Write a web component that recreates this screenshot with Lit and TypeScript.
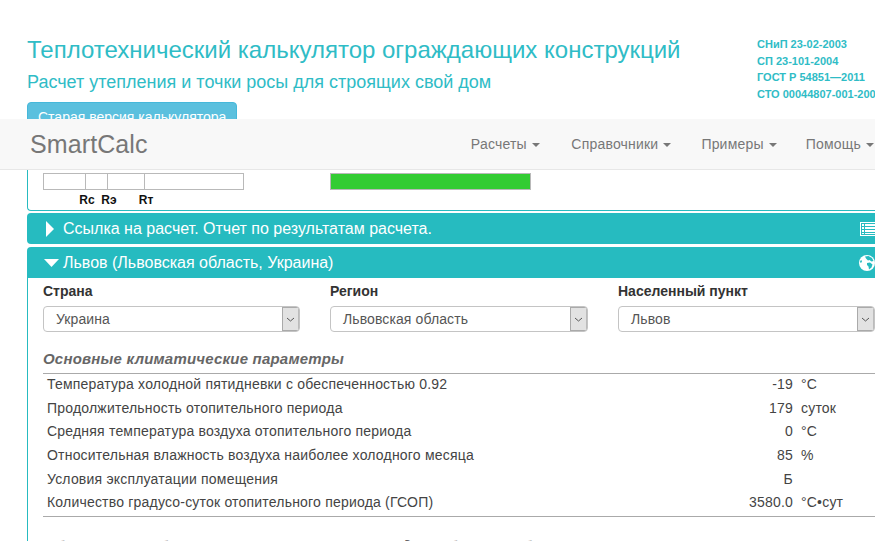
import { LitElement, html, css, svg } from "lit";
import { customElement } from "lit/decorators.js";

const select = (v: string) => html`<div class="select"><span>${v}</span><i><svg width="9" height="5" viewBox="0 0 9 5"><path d="M1 1l3.500 3L8 1" fill="none" stroke="#555" stroke-width="1"/></svg></i></div>`;

const rows = [
  ["Температура холодной пятидневки с обеспеченностью 0.92", "-19", "°C"],
  ["Продолжительность отопительного периода", "179", "суток"],
  ["Средняя температура воздуха отопительного периода", "0", "°C"],
  ["Относительная влажность воздуха наиболее холодного месяца", "85", "%"],
  ["Условия эксплуатации помещения", "Б", ""],
  ["Количество градусо-суток отопительного периода (ГСОП)", "3580.0", "°C•сут"],
];

const listIcon = svg`<svg width="15" height="16" viewBox="0 0 15 16"><path fill="#fff" d="M0 1h15v14H0z"/><path fill="#26bbc0" d="M1 2h14v12H1z"/><path fill="#fff" d="M2 3h2v2H2zM5 3h10v2H5zM2 6h2v2H2zM5 6h10v2H5zM2 9h2v2H2zM5 9h10v2H5zM2 12h2v1H2zM5 12h10v1H5z"/></svg>`;
const globeIcon = svg`<svg width="16" height="16" viewBox="0 0 16 16"><circle cx="8" cy="8" r="8" fill="#fff"/><path fill="#26bbc0" d="M6 1.500L9.500 1 13 3l1.500 3-2 .5-2-1.500-1.500.5L7 3.500zM8 8l3-.5 2.500 2-1 3-2.500 2-.5-3-1.500-1.500zM1 6l1.500-1L3 7 1.500 8z"/></svg>`;

@customElement("app-root")
export class AppRoot extends LitElement {
  static styles = css`
    :host { display: block; position: relative; width: 875px; height: 541px; overflow: hidden; background: #fff; font-family: "Liberation Sans", Arial, sans-serif; color: #333; }
    .head { display: flex; height: 119px; padding-left: 27px; box-sizing: border-box; overflow: hidden; }
    .titles { width: 730px; flex: none; }
    h1 { margin: 35px 0 0; font-size: 24px; line-height: 30px; font-weight: 400; color: #2fbcc6; white-space: nowrap; }
    h2 { margin: 6px 0 0; font-size: 18px; line-height: 22px; font-weight: 400; color: #2fbcc6; white-space: nowrap; }
    .old { display: inline-block; margin-top: 9px; padding: 4px 10px; height: 32px; box-sizing: border-box; background: #5bc0de; border: 1px solid #46b8da; border-radius: 4px; color: #fff; font-size: 14px; line-height: 20px; }
    .norms { margin: 36px 0 0; font-size: 11px; font-weight: 700; line-height: 16.500px; color: #2fbcc6; white-space: nowrap; }
    nav { display: flex; align-items: center; height: 51px; box-sizing: border-box; background: #f8f8f8; border-bottom: 1px solid #e7e7e7; padding: 0 0 0 30px; overflow: hidden; }
    .brand { font-size: 25px; letter-spacing: .1px; color: #777; line-height: 50px; margin-top: -1px; }
    .menu { display: flex; margin-left: auto; gap: 30px; font-size: 14px; letter-spacing: .2px; color: #777; margin-right: 1px; white-space: nowrap; }
    .menu span { display: inline-flex; align-items: center; gap: 5px; }
    .menu span:first-child { margin-right: 1.500px; }
    .menu span:nth-child(3) { margin-right: -1px; }
    .caret { width: 0; height: 0; border-left: 4px solid transparent; border-right: 4px solid transparent; border-top: 4px solid #777; margin-top: 2px; }
    .main { margin-left: 27px; margin-right: -10px; }
    .panel { border-left: 1px solid #26bbc0; border-bottom: 1px solid #26bbc0; border-radius: 0 0 0 4px; height: 41px; padding: 3px 0 0 15px; box-sizing: border-box; display: grid; grid-template-columns: 287px 1fr; }
    .scale { position: relative; width: 201px; height: 17px; border: 1px solid #b9b9b9; box-sizing: border-box; }
    .tick { position: absolute; top: 0; height: 15px; width: 1px; background: #b9b9b9; }
    .lab { position: absolute; top: 19px; font-size: 12px; font-weight: 700; line-height: 15px; color: #111; transform: translateX(-50%); }
    .green { width: 201px; height: 17px; box-sizing: border-box; background: #33cc33; border: 1px solid #b9b9b9; }
    .bar { display: flex; align-items: center; height: 31px; background: #26bbc0; color: #fff; font-size: 16px; border-radius: 4px 4px 0 0; margin-top: 3px; padding-right: 10px; white-space: nowrap; }
    .bar.first { border-radius: 4px; margin-top: 2px; }
    .bar .ico { margin-left: auto; display: flex; }
    .bar b { display: flex; justify-content: flex-end; box-sizing: border-box; width: 36px; padding-right: 8px; flex: none; }
    .bar.open b { padding-right: 4px; }
    .body { border-left: 1px solid #26bbc0; padding: 0 0 0 15px; height: 400px; }
    .filters { display: grid; grid-template-columns: 287px 288px 257px; padding-top: 3px; }
    label { display: block; font-size: 14px; font-weight: 700; line-height: 20px; color: #333; margin-bottom: 5px; }
    .select { display: flex; box-sizing: border-box; height: 26px; border: 1px solid #c4c4c4; border-radius: 4px; font-size: 14px; letter-spacing: .1px; color: #555; background: #fff; overflow: hidden; }
    .filters > div:nth-child(1) .select { width: 257px; }
    .filters > div:nth-child(2) .select { width: 258px; }
    .filters > div:nth-child(3) .select { width: 257px; }
    .select span { flex: 1; padding-left: 12px; line-height: 24px; }
    .select i { width: 15px; flex: none; background: #e2e2e2; border: 1px solid #aaa; border-right-color: #bbb; display: flex; align-items: center; justify-content: center; }
    h4 { margin: 17px 0 4px; font-size: 15px; line-height: 20px; font-weight: 700; font-style: italic; letter-spacing: .2px; color: #666; white-space: nowrap; }
    table { border-collapse: collapse; width: 832px; border-top: 1px solid #aaa; border-bottom: 1px solid #aaa; font-size: 14px; letter-spacing: .2px; color: #444; }
    td { padding: 0 0 3px 4px; height: 20.600px; line-height: 20px; white-space: nowrap; }
    td.v { text-align: right; width: 60px; padding-left: 0; }
    td.u { width: 74px; padding-left: 8px; }
    h4.next { margin-top: 19px; }
  `;
  render() {
    return html`
      <div class="head">
        <div class="titles">
          <h1>Теплотехнический калькулятор ограждающих конструкций</h1>
          <h2>Расчет утепления и точки росы для строящих свой дом</h2>
          <span class="old">Старая версия калькулятора</span>
        </div>
        <div class="norms">СНиП 23-02-2003<br>СП 23-101-2004<br>ГОСТ Р 54851—2011<br>СТО 00044807-001-2006</div>
      </div>
      <nav>
        <div class="brand">SmartCalc</div>
        <div class="menu">
          <span>Расчеты <em class="caret"></em></span>
          <span>Справочники <em class="caret"></em></span>
          <span>Примеры <em class="caret"></em></span>
          <span>Помощь <em class="caret"></em></span>
        </div>
      </nav>
      <div class="main">
        <div class="panel">
          <div class="scale">
            <div class="tick" style="left:41px"></div><div class="tick" style="left:63px"></div><div class="tick" style="left:100px"></div>
            <div class="lab" style="left:43px">Rc</div><div class="lab" style="left:65px">Rэ</div><div class="lab" style="left:102px">Rт</div>
          </div>
          <div class="green"></div>
        </div>
        <div class="bar first"><b><svg width="10" height="16" viewBox="0 0 10 16"><path fill="#fff" d="M1 0l8 8-8 8z"/></svg></b>Ссылка на расчет. Отчет по результатам расчета.<span class="ico">${listIcon}</span></div>
        <div class="bar open"><b><svg width="15" height="8" viewBox="0 0 15 8"><path fill="#fff" d="M0 0h15L7.500 8z"/></svg></b>Львов (Львовская область, Украина)<span class="ico">${globeIcon}</span></div>
        <div class="body">
          <div class="filters">
            <div><label>Страна</label>${select("Украина")}</div>
            <div><label>Регион</label>${select("Львовская область")}</div>
            <div><label>Населенный пункт</label>${select("Львов")}</div>
          </div>
          <h4>Основные климатические параметры</h4>
          <table>
            ${rows.map((r) => html`<tr><td>${r[0]}</td><td class="v">${r[1]}</td><td class="u">${r[2]}</td></tr>`)}
          </table>
          <h4 class="next">Объем и тип обогрева помещения, режим воздухообмена и обогрева</h4>
        </div>
      </div>
    `;
  }
}
